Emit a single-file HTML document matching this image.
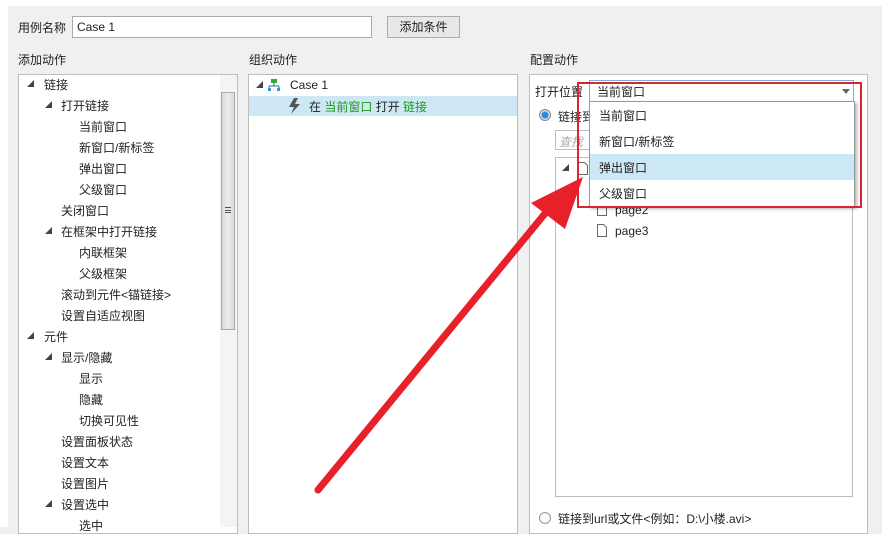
<!DOCTYPE html>
<html><head><meta charset="utf-8"><style>
*{margin:0;padding:0;box-sizing:border-box}
body{width:882px;height:527px;overflow:hidden;background:#f0f0f0;font-family:"Liberation Sans","Noto Sans CJK SC",sans-serif;font-size:12px;color:#222;position:relative}
.a{position:absolute;white-space:nowrap}
.box{position:absolute;background:#fff;border:1px solid #bdbdbd}
.tri{position:absolute;width:0;height:0;border-left:7px solid transparent;border-bottom:7px solid #444}
.g{color:#1a9a1a}
.t .a,.t .tri{margin-top:-2px}
</style></head><body>
<div class="a" style="left:0;top:0;width:882px;height:6px;background:#fff"></div>
<div class="a" style="left:0;top:0;width:8px;height:527px;background:#fff"></div>
<div class="a" style="left:18px;top:19px">用例名称</div>
<div class="box" style="left:72px;top:16px;width:300px;height:22px;border-color:#aaa"></div>
<div class="a" style="left:77px;top:20px">Case 1</div>
<div class="a" style="left:387px;top:16px;width:73px;height:22px;border:1px solid #adadad;background:#e8e8e8;text-align:center;line-height:20px">添加条件</div>
<div class="a" style="left:18px;top:51px">添加动作</div>
<div class="a" style="left:249px;top:51px">组织动作</div>
<div class="a" style="left:530px;top:51px">配置动作</div>

<div class="box" style="left:18px;top:74px;width:220px;height:460px"></div>
<div class="a" style="left:220px;top:75px;width:17px;height:452px;background:#f4f4f4"></div>
<div class="a" style="left:221px;top:92px;width:14px;height:238px;background:linear-gradient(90deg,#d8d8d8,#ececec,#d8d8d8);border:1px solid #aaa"></div>
<div class="a" style="left:225px;top:207px;width:6px;height:6px;border-top:1px solid #555;border-bottom:1px solid #555"><div style="margin-top:2px;border-top:1px solid #555"></div></div>
<div class="t">
<div class="tri" style="left:27px;top:82px"></div><div class="a" style="left:44px;top:78px">链接</div>
<div class="tri" style="left:45px;top:103px"></div><div class="a" style="left:61px;top:99px">打开链接</div>
<div class="a" style="left:79px;top:120px">当前窗口</div>
<div class="a" style="left:79px;top:141px">新窗口/新标签</div>
<div class="a" style="left:79px;top:162px">弹出窗口</div>
<div class="a" style="left:79px;top:183px">父级窗口</div>
<div class="a" style="left:61px;top:204px">关闭窗口</div>
<div class="tri" style="left:45px;top:229px"></div><div class="a" style="left:61px;top:225px">在框架中打开链接</div>
<div class="a" style="left:79px;top:246px">内联框架</div>
<div class="a" style="left:79px;top:267px">父级框架</div>
<div class="a" style="left:61px;top:288px">滚动到元件&lt;锚链接&gt;</div>
<div class="a" style="left:61px;top:309px">设置自适应视图</div>
<div class="tri" style="left:27px;top:334px"></div><div class="a" style="left:44px;top:330px">元件</div>
<div class="tri" style="left:45px;top:355px"></div><div class="a" style="left:61px;top:351px">显示/隐藏</div>
<div class="a" style="left:79px;top:372px">显示</div>
<div class="a" style="left:79px;top:393px">隐藏</div>
<div class="a" style="left:79px;top:414px">切换可见性</div>
<div class="a" style="left:61px;top:435px">设置面板状态</div>
<div class="a" style="left:61px;top:456px">设置文本</div>
<div class="a" style="left:61px;top:477px">设置图片</div>
<div class="tri" style="left:45px;top:502px"></div><div class="a" style="left:61px;top:498px">设置选中</div>
<div class="a" style="left:79px;top:519px">选中</div>
</div>

<div class="box" style="left:248px;top:74px;width:270px;height:460px"></div>
<div class="a" style="left:249px;top:96px;width:268px;height:20px;background:#cde8f4"></div>
<div class="tri" style="left:256px;top:81px"></div>
<svg class="a" style="left:268px;top:79px" width="12" height="12"><rect x="3" y="0" width="6" height="4" fill="#3a3"/><path d="M6 4v3M1 7h10M1 7v2M11 7v2" stroke="#36c" fill="none"/><rect x="0" y="9" width="3" height="3" fill="#39c"/><rect x="9" y="9" width="3" height="3" fill="#39c"/></svg>
<div class="a" style="left:290px;top:78px">Case 1</div>
<svg class="a" style="left:289px;top:98px" width="12" height="16"><path d="M5 0L0 9h5L2 16 11 6H6L9 0z" fill="#555"/></svg>
<div class="a" style="left:309px;top:98px">在 <span class="g">当前窗口</span> 打开 <span class="g">链接</span></div>

<div class="box" style="left:529px;top:74px;width:339px;height:460px"></div>
<div class="a" style="left:535px;top:83px">打开位置</div>
<div class="box" style="left:589px;top:80px;width:265px;height:22px;border-color:#7aaed6"></div>
<div class="a" style="left:597px;top:83px">当前窗口</div>
<div class="a" style="left:842px;top:89px;border-left:4px solid transparent;border-right:4px solid transparent;border-top:5px solid #666"></div>
<div class="a" style="left:539px;top:109px;width:12px;height:12px;border-radius:50%;border:1px solid #888;background:radial-gradient(circle,#2a8be0 3px,#dde 4px)"></div>
<div class="a" style="left:558px;top:108px">链接到</div>
<div class="box" style="left:555px;top:130px;width:40px;height:20px"></div>
<div class="a" style="left:559px;top:133px;color:#aaa;font-style:italic">查找</div>
<div class="box" style="left:555px;top:157px;width:298px;height:340px"></div>
<div class="tri" style="left:562px;top:164px"></div>
<svg class="a" style="left:578px;top:162px" width="10" height="13"><path d="M.5.5h6l3 3v9h-9z" fill="#fff" stroke="#666"/></svg>
<svg class="a" style="left:597px;top:203px" width="10" height="13"><path d="M.5.5h6l3 3v9h-9z" fill="#fff" stroke="#666"/></svg>
<div class="a" style="left:615px;top:203px">page2</div>
<svg class="a" style="left:597px;top:224px" width="10" height="13"><path d="M.5.5h6l3 3v9h-9z" fill="#fff" stroke="#666"/></svg>
<div class="a" style="left:615px;top:224px">page3</div>
<div class="a" style="left:539px;top:512px;width:12px;height:12px;border-radius:50%;border:1px solid #999;background:#fafafa"></div>
<div class="a" style="left:558px;top:510px">链接到url或文件&lt;例如：D:\小楼.avi&gt;</div>

<div class="a" style="left:589px;top:101px;width:266px;height:106px;background:#fff;border:1px solid #999;box-shadow:2px 2px 3px rgba(0,0,0,.3)"></div>
<div class="a" style="left:590px;top:154px;width:264px;height:26px;background:#cce8f6"></div>
<div class="a" style="left:599px;top:107px">当前窗口</div>
<div class="a" style="left:599px;top:133px">新窗口/新标签</div>
<div class="a" style="left:599px;top:159px">弹出窗口</div>
<div class="a" style="left:599px;top:185px">父级窗口</div>
<div class="a" style="left:577px;top:82px;width:285px;height:126px;border:2px solid #d9252f"></div>

<svg class="a" style="left:0;top:0" width="882" height="527"><line x1="318" y1="490" x2="552" y2="205" stroke="#e8202a" stroke-width="7" stroke-linecap="round"/><path d="M583 177L531 203L565 229z" fill="#e8202a"/></svg>
</body></html>
